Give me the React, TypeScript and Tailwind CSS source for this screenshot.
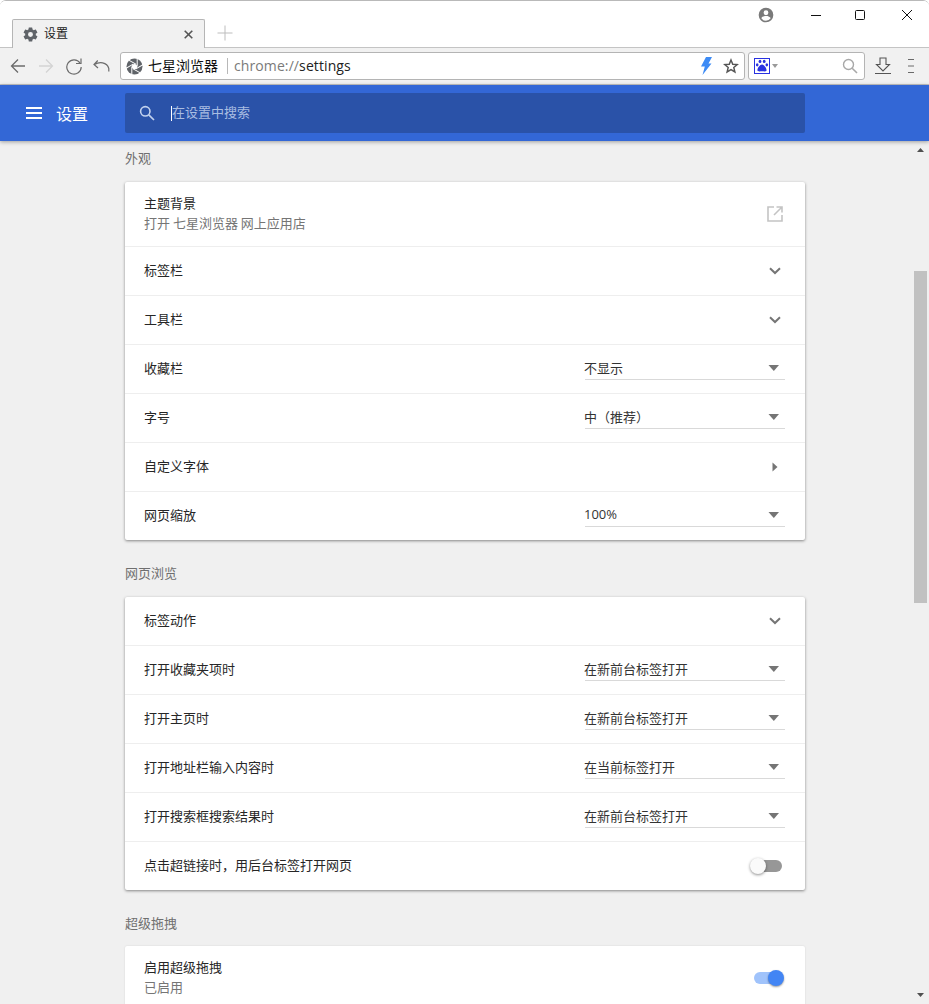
import React from "react";

const CJK = "font-['Noto_Sans_CJK_SC','Noto_Sans',sans-serif]";

function Chevron() {
  return (
    <svg width="12" height="8" viewBox="0 0 12 8" className="mr-[4px]">
      <path d="M1 1.2 L6 6 L11 1.2" fill="none" stroke="#757575" strokeWidth="2" />
    </svg>
  );
}

function Select({ value, latin }: { value: string; latin?: boolean }) {
  return (
    <div className="w-[200px] h-[24px] mb-[2px] border-b border-[#d9d9d9] flex items-center justify-between">
      <span className={`text-[13px] text-[#333] -ml-px ${latin ? "font-['Open_Sans',sans-serif] text-[12px]" : ""}`}>{value}</span>
      <svg width="12" height="6" viewBox="0 0 12 6" className="mr-[5px]">
        <path d="M0.5 0 H11 L5.8 6 Z" fill="#757575" />
      </svg>
    </div>
  );
}

function Row({ label, children, first }: { label: string; children?: React.ReactNode; first?: boolean }) {
  return (
    <div className={`flex items-center justify-between pl-[19px] pr-[20px] ${first ? "h-[48px]" : "h-[49px] border-t border-[#eeeeee]"}`}>
      <span className="text-[13px] text-[#262626] pb-[2px]">{label}</span>
      {children}
    </div>
  );
}

function Card({ children, cut }: { children: React.ReactNode; cut?: boolean }) {
  return (
    <div className={`w-[680px] bg-white rounded-[2px] shrink-0 ${cut ? "shadow-[0_0_2px_rgba(0,0,0,0.12)]" : "shadow-[0_1px_3px_rgba(0,0,0,0.45)]"}`}>
      {children}
    </div>
  );
}

function Heading({ text, cls }: { text: string; cls: string }) {
  return <div className={`text-[13px] leading-[18px] text-[#6f6f6f] ${cls}`}>{text}</div>;
}

function Toggle({ on }: { on?: boolean }) {
  return (
    <div className="relative w-[36px] h-[18px] flex items-center mr-[1px]">
      <div className={`ml-auto w-[28px] h-[12px] rounded-full mr-[2px] ${on ? "bg-[#a0c3fb]" : "bg-[#979797]"}`} />
      <div
        className={`absolute top-px w-[16px] h-[16px] rounded-full ${
          on ? "right-0 bg-[#4285f4] shadow-[0_1px_2px_rgba(0,0,0,0.4)]" : "left-[2px] bg-[#fafafa] shadow-[0_1px_3px_rgba(0,0,0,0.45)]"
        }`}
      />
    </div>
  );
}

export default function App() {
  return (
    <div className={`w-[929px] h-[1004px] overflow-hidden flex flex-col bg-white ${CJK} rounded-t-[6px] border-t border-[#b9b9b9]`}>
      {/* Title strip */}
      <div className="h-[46px] shrink-0 flex items-end relative bg-white">
        <div className="ml-[12px] w-[193px] h-[29px] bg-[#f1f1f1] border border-b-0 border-[#b5b5b5] rounded-t-[2px] flex items-center pl-[9px] pr-[11px] -mb-[1px] z-10">
          <svg width="17" height="17" viewBox="0 0 24 24" fill="#5f6368">
            <path d="M19.43 12.98c.04-.32.07-.64.07-.98s-.03-.66-.07-.98l2.11-1.65c.19-.15.24-.42.12-.64l-2-3.46c-.12-.22-.39-.3-.61-.22l-2.49 1c-.52-.4-1.08-.73-1.69-.98l-.38-2.65A.49.49 0 0 0 14 2h-4c-.25 0-.46.18-.49.42l-.38 2.65c-.61.25-1.17.59-1.69.98l-2.49-1c-.23-.09-.49 0-.61.22l-2 3.46c-.13.22-.07.49.12.64l2.11 1.65c-.04.32-.07.65-.07.98s.03.66.07.98l-2.11 1.65c-.19.15-.24.42-.12.64l2 3.46c.12.22.39.3.61.22l2.49-1c.52.4 1.08.73 1.69.98l.38 2.65c.03.24.24.42.49.42h4c.25 0 .46-.18.49-.42l.38-2.65c.61-.25 1.17-.59 1.69-.98l2.49 1c.23.09.49 0 .61-.22l2-3.46c.12-.22.07-.49-.12-.64l-2.11-1.65zM12 15.5a3.5 3.5 0 1 1 0-7 3.5 3.5 0 0 1 0 7z" />
          </svg>
          <span className="ml-[5px] text-[12px] text-[#222] pb-[2px]">设置</span>
          <svg width="9" height="9" viewBox="0 0 9 9" className="ml-auto">
            <path d="M0.7 0.7 L8.3 8.3 M8.3 0.7 L0.7 8.3" stroke="#555" strokeWidth="1.6" />
          </svg>
        </div>
        <svg width="16" height="16" viewBox="0 0 16 16" className="ml-[12px] mb-[6px]">
          <path d="M8 0.5 V15.5 M0.5 8 H15.5" stroke="#bdbdbd" strokeWidth="1" />
        </svg>
        {/* window controls */}
        <div className="absolute top-[6px] right-[16px] flex items-center">
          <svg width="16" height="16" viewBox="0 0 24 24" fill="#7a7a7a" className="mr-[36px]">
            <path d="M12 1a11 11 0 1 0 0 22 11 11 0 0 0 0-22zm0 4a3.6 3.6 0 1 1 0 7.2A3.6 3.6 0 0 1 12 5zm0 15.6a8.6 8.6 0 0 1-7-3.6c.04-2.3 4.7-3.6 7-3.6s6.96 1.3 7 3.6a8.6 8.6 0 0 1-7 3.6z" />
          </svg>
          <svg width="12" height="12" viewBox="0 0 12 12" className="mr-[32px]">
            <path d="M1 6.5 H11" stroke="#111" strokeWidth="1" />
          </svg>
          <svg width="12" height="12" viewBox="0 0 12 12" className="mr-[35px]">
            <rect x="1.5" y="1.5" width="9" height="9" rx="1" fill="none" stroke="#111" strokeWidth="1" />
          </svg>
          <svg width="12" height="12" viewBox="0 0 12 12">
            <path d="M1 1 L11 11 M11 1 L1 11" stroke="#111" strokeWidth="1" />
          </svg>
        </div>
      </div>
      {/* Toolbar */}
      <div className="h-[38px] shrink-0 bg-[#f1f1f1] border-t border-b border-[#c4c4c4] flex items-center relative">
        <svg width="16" height="16" viewBox="0 0 16 16" className="ml-[10px]">
          <path d="M15 8 H1.5 M8 1.5 L1.5 8 L8 14.5" fill="none" stroke="#6c6c6c" strokeWidth="1.3" />
        </svg>
        <svg width="16" height="16" viewBox="0 0 16 16" className="ml-[12px]">
          <path d="M1 8 H14.5 M8 1.5 L14.5 8 L8 14.5" fill="none" stroke="#d4d4d4" strokeWidth="1.3" />
        </svg>
        <svg width="18" height="18" viewBox="0 0 18 18" className="ml-[11px]">
          <path d="M15 6 A7.2 7.2 0 1 0 16.2 10" fill="none" stroke="#6c6c6c" strokeWidth="1.2" />
          <path d="M16 1.5 V6.5 H11" fill="none" stroke="#6c6c6c" strokeWidth="1.2" />
        </svg>
        <svg width="17" height="14" viewBox="0 0 17 14" className="ml-[10px]">
          <path d="M4.8 1.5 L1 5.5 L5 9 M1.5 5.5 C6 2.6 14 2.5 15.8 9.5 V12.5" fill="none" stroke="#6c6c6c" strokeWidth="1.2" />
        </svg>
        {/* Address */}
        <div className="ml-[10px] w-[625px] h-[28px] bg-white border border-[#b4b4b4] rounded-[3px] flex items-center pl-[5px] pr-[5px]">
          <svg width="17" height="17" viewBox="0 0 17 17">
            <circle cx="8.5" cy="8.5" r="8" fill="#5f6368" />
            {[0, 60, 120, 180, 240, 300].map((a) => (
              <path key={a} d="M11.2 0.3 V8.5" stroke="#fff" strokeWidth="1" transform={`rotate(${a} 8.5 8.5)`} />
            ))}
            <circle cx="8.5" cy="8.5" r="2.6" fill="#fff" />
          </svg>
          <span className="ml-[5px] text-[14px] text-[#111] whitespace-nowrap pb-[2px]">七星浏览器</span>
          <span className="ml-[9px] w-px h-[16px] bg-[#b8b8b8]" />
          <span className="ml-[6px] text-[14px] font-['Open_Sans',sans-serif] text-[#7a7a7a] tracking-[0.1px] pb-[1px]">
            chrome://<span className="text-[#222]">settings</span>
          </span>
          <svg width="12" height="18" viewBox="0 0 12 18" className="ml-auto">
            <path d="M6 0 H12 L8.5 6.5 H11.5 L2.5 18 L4.8 9.5 H1 Z" fill="#3d8bf5" />
          </svg>
          <svg width="16" height="16" viewBox="0 0 24 24" className="ml-[11px] mr-[0px]">
            <path d="M12 3 L14.6 9.3 L21.4 9.8 L16.2 14.2 L17.8 20.8 L12 17.3 L6.2 20.8 L7.8 14.2 L2.6 9.8 L9.4 9.3 Z" fill="none" stroke="#555" strokeWidth="2.2" />
          </svg>
        </div>
        {/* Search */}
        <div className="ml-[3px] w-[117px] h-[28px] bg-white border border-[#b4b4b4] rounded-[3px] flex items-center pl-[5px] pr-[6px]">
          <div className="w-[16px] h-[16px] border border-[#2932e1] flex items-center justify-center">
            <svg width="14" height="14" viewBox="0 0 14 14" fill="#2932e1">
              <ellipse cx="5" cy="2.4" rx="1.4" ry="1.7" />
              <ellipse cx="9.2" cy="2.4" rx="1.4" ry="1.7" />
              <ellipse cx="2.2" cy="5.8" rx="1.3" ry="1.6" />
              <ellipse cx="11.8" cy="5.8" rx="1.3" ry="1.6" />
              <path d="M7 5.5 C9 5.5 12 9.5 11.5 11.5 C11 13 8.5 12.2 7 12.2 C5.5 12.2 3 13 2.5 11.5 C2 9.5 5 5.5 7 5.5 Z" />
            </svg>
          </div>
          <svg width="6" height="4" viewBox="0 0 6 4" className="ml-[2px]">
            <path d="M0 0 H6 L3 4 Z" fill="#9a9a9a" />
          </svg>
          <svg width="16" height="16" viewBox="0 0 16 16" className="ml-auto">
            <circle cx="6.5" cy="6.5" r="5" fill="none" stroke="#a8a8a8" strokeWidth="1.4" />
            <path d="M10.2 10.2 L15 15" stroke="#a8a8a8" strokeWidth="1.6" />
          </svg>
        </div>
        <svg width="16" height="18" viewBox="0 0 16 18" className="ml-[10px]">
          <path d="M5 1 H11 V7.5 H14.5 L8 14 L1.5 7.5 H5 Z" fill="none" stroke="#555" strokeWidth="1.1" />
          <path d="M0 16.5 H16" stroke="#555" strokeWidth="1.1" />
        </svg>
        <svg width="8" height="16" viewBox="0 0 8 16" className="ml-[16px]">
          <path d="M1 1.5 H7 M1 8 H7 M1 14.5 H7" stroke="#6a6a6a" strokeWidth="1" />
        </svg>
      </div>
      {/* Blue header */}
      <div className="h-[56px] shrink-0 bg-[#3367d6] flex items-center shadow-[0_1px_4px_rgba(0,0,0,0.35)] z-10">
        <svg width="16" height="12" viewBox="0 0 16 12" className="ml-[26px]">
          <path d="M0 1 H16 M0 6 H16 M0 11 H16" stroke="#fff" strokeWidth="1.8" />
        </svg>
        <span className="ml-[14px] text-[16px] text-white pb-[1px]">设置</span>
        <div className="ml-[37px] w-[680px] h-[40px] bg-[#2a52a8] rounded-[2px] flex items-center pl-[14px]">
          <svg width="16" height="16" viewBox="0 0 16 16">
            <circle cx="6.3" cy="6.3" r="4.7" fill="none" stroke="#c2d2ee" strokeWidth="1.6" />
            <path d="M9.8 9.8 L15 15" stroke="#c2d2ee" strokeWidth="1.7" />
          </svg>
          <span className="ml-[16px] w-px h-[15px] bg-white" />
          <span className="text-[13px] text-[#a9bde2] pb-[3px]">在设置中搜索</span>
        </div>
      </div>
      {/* Body */}
      <div className="flex-1 min-h-0 flex bg-[#f0f0f0]">
        <div className="flex-1 min-w-0 overflow-hidden flex flex-col pl-[125px]">
          <Heading text="外观" cls="mt-[8px] mb-[15px]" />
          <Card>
            <div className="h-[64px] flex items-center justify-between pl-[19px] pr-[22px]">
              <div className="flex flex-col pb-[3px]">
                <span className="text-[13px] leading-[20px] text-[#262626]">主题背景</span>
                <span className="text-[13px] leading-[20px] text-[#757575]">打开 七星浏览器 网上应用店</span>
              </div>
              <svg width="16" height="16" viewBox="0 0 16 16" fill="none" stroke="#c4c4c4" strokeWidth="1.6">
                <path d="M7 1 H1 V15 H15 V9 M9.5 1 H15 V6.5 M15 1 L7 9" />
              </svg>
            </div>
            <Row label="标签栏"><Chevron /></Row>
            <Row label="工具栏"><Chevron /></Row>
            <Row label="收藏栏"><Select value="不显示" /></Row>
            <Row label="字号"><Select value="中（推荐）" /></Row>
            <Row label="自定义字体">
              <svg width="6" height="10" viewBox="0 0 6 10" className="mr-[7px]">
                <path d="M0.5 0.5 L5.5 5 L0.5 9.5 Z" fill="#757575" />
              </svg>
            </Row>
            <Row label="网页缩放"><Select value="100%" latin /></Row>
          </Card>
          <Heading text="网页浏览" cls="mt-[24px] mb-[15px]" />
          <Card>
            <Row label="标签动作" first><Chevron /></Row>
            <Row label="打开收藏夹项时"><Select value="在新前台标签打开" /></Row>
            <Row label="打开主页时"><Select value="在新前台标签打开" /></Row>
            <Row label="打开地址栏输入内容时"><Select value="在当前标签打开" /></Row>
            <Row label="打开搜索框搜索结果时"><Select value="在新前台标签打开" /></Row>
            <Row label="点击超链接时，用后台标签打开网页"><Toggle /></Row>
          </Card>
          <Heading text="超级拖拽" cls="mt-[24px] mb-[14px]" />
          <Card cut>
            <div className="h-[64px] flex items-center justify-between pl-[19px] pr-[20px]">
              <div className="flex flex-col pb-[3px]">
                <span className="text-[13px] leading-[20px] text-[#262626]">启用超级拖拽</span>
                <span className="text-[13px] leading-[20px] text-[#757575]">已启用</span>
              </div>
              <Toggle on />
            </div>
          </Card>
        </div>
        {/* Scrollbar */}
        <div className="w-[15px] shrink-0 flex flex-col items-center relative pr-[2px]">
          <svg width="7" height="4" viewBox="0 0 7 4" className="mt-[7px]">
            <path d="M3.5 0 L7 4 H0 Z" fill="#505050" />
          </svg>
          <div className="w-[13px] h-[332px] bg-[#c1c1c1] mt-[119px]" />
          <svg width="7" height="4" viewBox="0 0 7 4" className="mt-auto mb-[7px]">
            <path d="M0 0 H7 L3.5 4 Z" fill="#505050" />
          </svg>
        </div>
      </div>
    </div>
  );
}
